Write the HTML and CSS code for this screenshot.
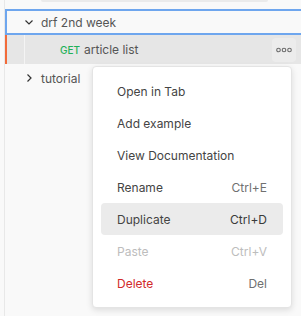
FILE: index.html
```html
<!DOCTYPE html>
<html lang="en">
<head>
    <meta charset="UTF-8">
    <title>Collections</title>
    <link rel="stylesheet" href="styles.css">
</head>
<body>
    <!-- Collection tree -->
    <div class="sidebar">
        <div class="search-edge"></div>

        <div class="row folder active">
            <svg class="chevron" width="16" height="16" viewBox="0 0 16 16"><path d="M4.5 6.5 8 10l3.5-3.5" fill="none" stroke="#333" stroke-width="1.2"/></svg>
            <span class="name">drf 2nd week</span>
        </div>

        <div class="row request selected">
            <span class="guide"></span>
            <span class="method">GET</span>
            <span class="name">article list</span>
            <span class="more">
                <svg width="16" height="6" viewBox="0 0 16 6"><circle cx="2.5" cy="3" r="1.8" fill="none" stroke="#6b6b6b" stroke-width="1.1"/><circle cx="8" cy="3" r="1.8" fill="none" stroke="#6b6b6b" stroke-width="1.1"/><circle cx="13.5" cy="3" r="1.8" fill="none" stroke="#6b6b6b" stroke-width="1.1"/></svg>
            </span>
        </div>

        <div class="row folder">
            <svg class="chevron" width="16" height="16" viewBox="0 0 16 16"><path d="M6.5 4.5 10 8l-3.5 3.5" fill="none" stroke="#333" stroke-width="1.2"/></svg>
            <span class="name">tutorial</span>
        </div>
    </div>

    <!-- Context menu -->
    <div class="menu">
        <div class="item">Open in Tab</div>
        <div class="item">Add example</div>
        <div class="item">View Documentation</div>
        <div class="item">Rename <span class="key">Ctrl+E</span></div>
        <div class="item hover">Duplicate <span class="key">Ctrl+D</span></div>
        <div class="item disabled">Paste <span class="key">Ctrl+V</span></div>
        <div class="item danger">Delete <span class="key">Del</span></div>
    </div>
</body>
</html>
```
FILE: styles.css
```css
/* General */
body {
    margin: 0;
    background: #f9f9f9;
    font-family: Inter, "Noto Sans", sans-serif;
    font-size: 12px;
    color: #555;
    height: 316px;
    overflow: hidden;
    position: relative;
}

/* Sidebar tree */
.sidebar {
    margin-left: 4px;
    border-left: 1px solid #e8e8e8;
    height: 316px;
}

.search-edge {
    margin-left: 36px;
    width: 227px;
    height: 2px;
    background: #ebebeb;
    border-radius: 0 0 4px 4px;
    margin-bottom: 7px;
}

.row {
    display: flex;
    align-items: center;
    height: 28px;
    box-sizing: border-box;
    position: relative;
}

.folder {
    padding-left: 16px;
}

.folder .chevron {
    margin-right: 4px;
}

.folder.active {
    height: 26px;
    border: 2px solid #6ea6ee;
    border-right: none;
    padding-left: 14px;
}

.request {
    height: 29px;
    background: #e6e6e6;
    border-left: 2px solid #f26b3a;
    padding-left: 53px;
}

.guide {
    position: absolute;
    left: 17px;
    top: 0;
    bottom: 0;
    width: 1px;
    background: #f4f4f4;
}

.method {
    color: #1fb158;
    font-size: 10px;
    font-weight: 500;
    margin-right: 4px;
}

.more {
    margin-left: auto;
    margin-right: 5px;
    width: 24px;
    height: 24px;
    border-radius: 4px;
    background: #ececec;
    display: flex;
    align-items: center;
    justify-content: center;
}

/* Context menu */
.menu {
    position: absolute;
    left: 92px;
    top: 66px;
    width: 182px;
    padding: 8px;
    background: #fff;
    border: 1px solid #e4e4e4;
    border-radius: 4px;
    box-shadow: 0 2px 6px rgba(0, 0, 0, 0.12);
}

.menu .item {
    display: flex;
    align-items: center;
    justify-content: space-between;
    height: 32px;
    padding: 0 16px;
    border-radius: 4px;
    color: #444;
}

.menu .key {
    color: #707070;
}

.menu .item.hover {
    background: #ebebeb;
}

.menu .item.hover .key {
    color: #3a3a3a;
}

.menu .item.disabled,
.menu .item.disabled .key {
    color: #bdbdbd;
}

.menu .item.danger {
    color: #d12a2a;
}
```
